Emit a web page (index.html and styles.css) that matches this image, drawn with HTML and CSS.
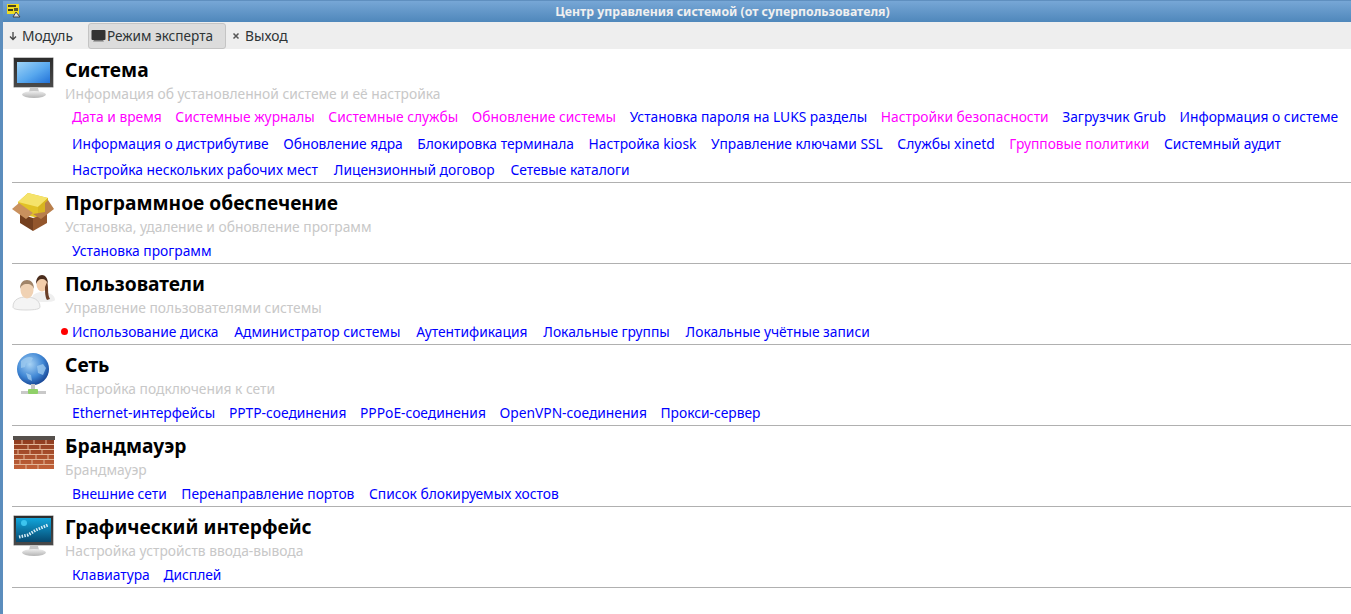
FILE: index.html
```html
<!DOCTYPE html>
<html lang="ru">
<head>
  <meta charset="UTF-8">
  <title>Центр управления системой</title>
  <link rel="stylesheet" href="styles.css">
</head>
<body>
  <svg width="0" height="0" class="defs">
    <defs>
      <linearGradient id="screen" x1="0" y1="0" x2="1" y2="1">
        <stop offset="0" stop-color="#9fd4f7"/>
        <stop offset="0.55" stop-color="#58a8ee"/>
        <stop offset="1" stop-color="#2272d8"/>
      </linearGradient>
      <linearGradient id="bezel" x1="0" y1="0" x2="0" y2="1">
        <stop offset="0" stop-color="#2c2c2c"/>
        <stop offset="1" stop-color="#4a4a4a"/>
      </linearGradient>
      <linearGradient id="stand" x1="0" y1="0" x2="0" y2="1">
        <stop offset="0" stop-color="#efefef"/>
        <stop offset="1" stop-color="#b4b4b4"/>
      </linearGradient>
      <linearGradient id="wall" x1="0" y1="0" x2="0" y2="1">
        <stop offset="0" stop-color="#8c3a1e"/>
        <stop offset="1" stop-color="#c2623a"/>
      </linearGradient>
      <linearGradient id="desktop" x1="0" y1="0" x2="0" y2="1">
        <stop offset="0" stop-color="#12a6dc"/>
        <stop offset="1" stop-color="#06486f"/>
      </linearGradient>
      <radialGradient id="globe" cx="0.4" cy="0.35" r="0.7">
        <stop offset="0" stop-color="#a9d4f5"/>
        <stop offset="0.6" stop-color="#3f86d4"/>
        <stop offset="1" stop-color="#14408f"/>
      </radialGradient>
    </defs>
  </svg>

  <header class="titlebar">
    <svg class="app-icon" width="14" height="14" viewBox="0 0 14 14">
      <rect x="0" y="0" width="12" height="10" fill="#f0dc20"/>
      <rect x="1" y="1" width="8" height="2" fill="#4a4420"/>
      <rect x="1" y="5" width="5" height="2" fill="#3a3a20"/>
      <rect x="7" y="4" width="4" height="3" fill="#5a5a30"/>
      <path d="M9 8l4 5H6z" stroke="#444" stroke-width="1" fill="#ddd"/>
    </svg>
    <span class="window-title">Центр управления системой (от суперпользователя)</span>
  </header>

  <nav class="toolbar">
    <button class="tool">
      <svg width="10" height="12" viewBox="0 0 10 12"><path d="M5 2v7M2 6.5 5 9.5 8 6.5" fill="none" stroke="#444" stroke-width="1.3"/></svg>
      Модуль
    </button>
    <button class="tool tool-active">
      <svg width="15" height="14" viewBox="0 0 15 14"><rect x="0.5" y="1" width="14" height="10" rx="1" fill="#333"/><path d="M3 11h9l1 1.5H2z" fill="#777"/></svg>
      Режим эксперта
    </button>
    <button class="tool tool-exit">
      <svg width="8" height="12" viewBox="0 0 8 12"><path d="M1.5 3.5 6.5 8.5M6.5 3.5 1.5 8.5" stroke="#555" stroke-width="1.5"/></svg>
      Выход
    </button>
  </nav>

  <main class="modules">
    <section class="module">
      <svg class="module-icon" width="44" height="44" viewBox="0 0 44 44">
        <rect x="1.5" y="0.5" width="40" height="30" rx="1" fill="url(#bezel)" stroke="#c4c4c4"/>
        <rect x="5" y="5" width="33" height="21" fill="url(#screen)"/>
        <path d="M18 31h8l1 4H17z" fill="#c8c8c8"/>
        <ellipse cx="22" cy="37.5" rx="12" ry="3.5" fill="url(#stand)"/>
      </svg>
      <div class="module-body">
        <h2>Система</h2>
        <p class="subtitle">Информация об установленной системе и её настройка</p>
        <div class="links links-tight">
          <a class="pink">Дата и время</a>
          <a class="pink">Системные журналы</a>
          <a class="pink">Системные службы</a>
          <a class="pink">Обновление системы</a>
          <a>Установка пароля на LUKS разделы</a>
          <a class="pink">Настройки безопасности</a>
          <a>Загрузчик Grub</a>
          <a>Информация о системе</a>
        </div>
        <div class="links">
          <a>Информация о дистрибутиве</a>
          <a>Обновление ядра</a>
          <a>Блокировка терминала</a>
          <a>Настройка kiosk</a>
          <a>Управление ключами SSL</a>
          <a>Службы xinetd</a>
          <a class="pink">Групповые политики</a>
          <a>Системный аудит</a>
        </div>
        <div class="links links-wide">
          <a>Настройка нескольких рабочих мест</a>
          <a>Лицензионный договор</a>
          <a>Сетевые каталоги</a>
        </div>
      </div>
    </section>

    <section class="module">
      <svg class="module-icon" width="44" height="44" viewBox="0 0 44 44">
        <path d="M6 11 16 2l20 5v14l-9 6-19-4z" fill="#e2c226"/>
        <path d="M6 11 16 2l20 5-10 9z" fill="#f5e36a"/>
        <path d="M26 16 36 7v14l-10 6z" fill="#d8b520"/>
        <path d="M8 23 21 27v13L8 32z" fill="#74401f"/>
        <path d="M35 22 21 27v13l14-8z" fill="#93562c"/>
        <path d="M0 18 7 12l14 10-7 6z" fill="#c9915e"/>
        <path d="M42 18 36 9l-3 3v9l-12 2 8 5z" fill="#b97f4c"/>
      </svg>
      <div class="module-body">
        <h2>Программное обеспечение</h2>
        <p class="subtitle">Установка, удаление и обновление программ</p>
        <div class="links">
          <a>Установка программ</a>
        </div>
      </div>
    </section>

    <section class="module">
      <svg class="module-icon" width="44" height="44" viewBox="0 0 44 44">
        <path d="M20 27c0-5 5-7 10-7s13 2 13 8c0 1-4 2-11 2s-12-1-12-3z" fill="#efefef"/>
        <ellipse cx="30" cy="12" rx="5.5" ry="7.5" fill="#f3cdaa"/>
        <path d="M24 12c0-6 3-9 6-9s6 3 6 9c-1-3-3-5-6-5s-5 2-6 5z" fill="#4a2c1c"/>
        <path d="M35 10c2 5 0 12 3 17l-3 1c-2-3-2-9-2-13z" fill="#6a3f28"/>
        <path d="M1 35c0-8 7-10 13-10s14 2 14 10c0 2-5 3-14 3S1 37 1 35z" fill="#f4f4f4" stroke="#cfcfcf" stroke-width=".8"/>
        <ellipse cx="15" cy="18" rx="6.5" ry="8.5" fill="#f0d2b4"/>
        <path d="M8 17c0-6 3-9 7-9s7 3 7 9c-1-3-3-5-7-5s-6 2-7 5z" fill="#a08468"/>
      </svg>
      <div class="module-body">
        <h2>Пользователи</h2>
        <p class="subtitle">Управление пользователями системы</p>
        <div class="links links-wide">
          <a class="marked">Использование диска</a>
          <a>Администратор системы</a>
          <a>Аутентификация</a>
          <a>Локальные группы</a>
          <a>Локальные учётные записи</a>
        </div>
      </div>
    </section>

    <section class="module">
      <svg class="module-icon" width="44" height="44" viewBox="0 0 44 44">
        <circle cx="21" cy="16" r="16" fill="url(#globe)"/>
        <path d="M9 8c4-4 9-5 12-3l-2 4-5 1-1 4-4 1zM25 13l6-2 3 4-3 7-5-2zM14 20l5 2 1 6-4-2z" fill="#9cc9ef" opacity=".8"/>
        <rect x="19" y="31" width="4" height="6" fill="#c6c6c6"/>
        <rect x="9" y="38" width="25" height="3" fill="#c9c9c9"/>
        <rect x="16" y="36" width="10" height="5" rx="1" fill="#8fd068"/>
      </svg>
      <div class="module-body">
        <h2>Сеть</h2>
        <p class="subtitle">Настройка подключения к сети</p>
        <div class="links links-tight">
          <a>Ethernet-интерфейсы</a>
          <a>PPTP-соединения</a>
          <a>PPPoE-соединения</a>
          <a>OpenVPN-соединения</a>
          <a>Прокси-сервер</a>
        </div>
      </div>
    </section>

    <section class="module">
      <svg class="module-icon" width="44" height="44" viewBox="0 0 44 44">
        <rect x="2" y="5" width="40" height="30" fill="url(#wall)"/>
        <rect x="1" y="2" width="42" height="4" fill="#55504c"/>
        <path d="M2 10.5h40M2 15.5h40M2 20.5h40M2 25.5h40M2 30.5h40M10 6v5M22 6v5M34 6v5M16 11v5M28 11v5M6 16v5M18 16v5M30 16v5M12 21v5M24 21v5M36 21v5M8 26v5M20 26v5M32 26v5M14 31v4M26 31v4" stroke="#e3b698" stroke-width="1" fill="none"/>
      </svg>
      <div class="module-body">
        <h2>Брандмауэр</h2>
        <p class="subtitle">Брандмауэр</p>
        <div class="links">
          <a>Внешние сети</a>
          <a>Перенаправление портов</a>
          <a>Список блокируемых хостов</a>
        </div>
      </div>
    </section>

    <section class="module">
      <svg class="module-icon" width="44" height="44" viewBox="0 0 44 44">
        <rect x="1.5" y="0.5" width="40" height="30" rx="1" fill="url(#bezel)" stroke="#c4c4c4"/>
        <rect x="4" y="3" width="35" height="24" fill="url(#desktop)"/>
        <path d="M7 22 16 20 24 15 36 10" stroke="#d8eef8" stroke-width="3" stroke-dasharray="1.5 1.2" fill="none"/>
        <circle cx="12" cy="8" r="3" fill="#3cc4ee"/>
        <path d="M18 31h8l1 4H17z" fill="#c8c8c8"/>
        <ellipse cx="22" cy="37.5" rx="12" ry="3.5" fill="url(#stand)"/>
      </svg>
      <div class="module-body">
        <h2>Графический интерфейс</h2>
        <p class="subtitle">Настройка устройств ввода-вывода</p>
        <div class="links links-tight">
          <a>Клавиатура</a>
          <a>Дисплей</a>
        </div>
      </div>
    </section>
  </main>
</body>
</html>
```

FILE: styles.css
```css
html, body {
  margin: 0;
  height: 100%;
}
body {
  width: 1351px;
  height: 614px;
  overflow: hidden;
  background: #fff;
  font-family: "Noto Sans", sans-serif;
  border-left: 3px solid #5b8dbd;
  box-sizing: border-box;
}
.defs {
  display: block;
  height: 0;
}
.titlebar {
  height: 22px;
  margin-left: -3px;
  display: flex;
  align-items: center;
  background: linear-gradient(#77a7d6, #4f87bb);
  border-top: 1px solid #5f8fbf;
  box-sizing: border-box;
  position: relative;
}
.app-icon {
  position: absolute;
  left: 7px;
  top: 3px;
}
.window-title {
  flex: 1;
  padding-left: 94px;
  text-align: center;
  color: #f0f0f0;
  font-weight: bold;
  font-size: 12.3px;
}
.toolbar {
  height: 27px;
  display: flex;
  align-items: center;
  background: #eee;
  box-sizing: border-box;
}
.tool {
  height: 26px;
  display: flex;
  align-items: center;
  gap: 4px;
  padding: 0 3px 0 4px;
  border: 1px solid transparent;
  background: none;
  font-family: "Noto Sans", sans-serif;
  font-size: 13.8px;
  color: #2e3436;
}
.tool-active {
  margin-left: 11px;
  gap: 1px;
  padding: 0 12px 0 2px;
  font-size: 13.6px;
  background: #dcdcdc;
  border-color: #c4c4c4;
  border-radius: 3px;
}
.tool-exit {
  margin-left: 1px;
  gap: 5px;
}
.modules {
  padding-left: 9px;
}
.module {
  display: flex;
  border-bottom: 1px solid #b0b0b0;
  padding-top: 8px;
  padding-bottom: 1px;
}
.module:first-child {
  padding-bottom: 0.5px;
}
.module + .module .module-body {
  margin-top: -1px;
}
.module-icon {
  flex: none;
  margin-right: 9px;
}
.module-body {
  flex: 1;
  min-width: 0;
}
h2 {
  margin: 0;
  font-size: 19.2px;
  line-height: 26px;
  font-weight: bold;
  color: #000;
}
.subtitle {
  margin: 0;
  font-size: 13.8px;
  line-height: 22px;
  color: #c8c8c8;
}
.module:first-child .subtitle {
  margin-bottom: -0.5px;
}
.links {
  display: flex;
  gap: 14.6px;
  padding-left: 7px;
  height: 24px;
  align-items: center;
  white-space: nowrap;
  font-size: 13.8px;
}
.links-tight {
  gap: 13.6px;
}
.links-wide {
  gap: 15.8px;
}
.links + .links {
  margin-top: 2.5px;
}
.links a {
  color: #0000ff;
}
.links a.pink {
  color: #ff00ff;
}
.links a.marked {
  position: relative;
}
.links a.marked::before {
  content: "";
  position: absolute;
  left: -11px;
  top: 6px;
  width: 7px;
  height: 7px;
  border-radius: 50%;
  background: #f00;
}
```
